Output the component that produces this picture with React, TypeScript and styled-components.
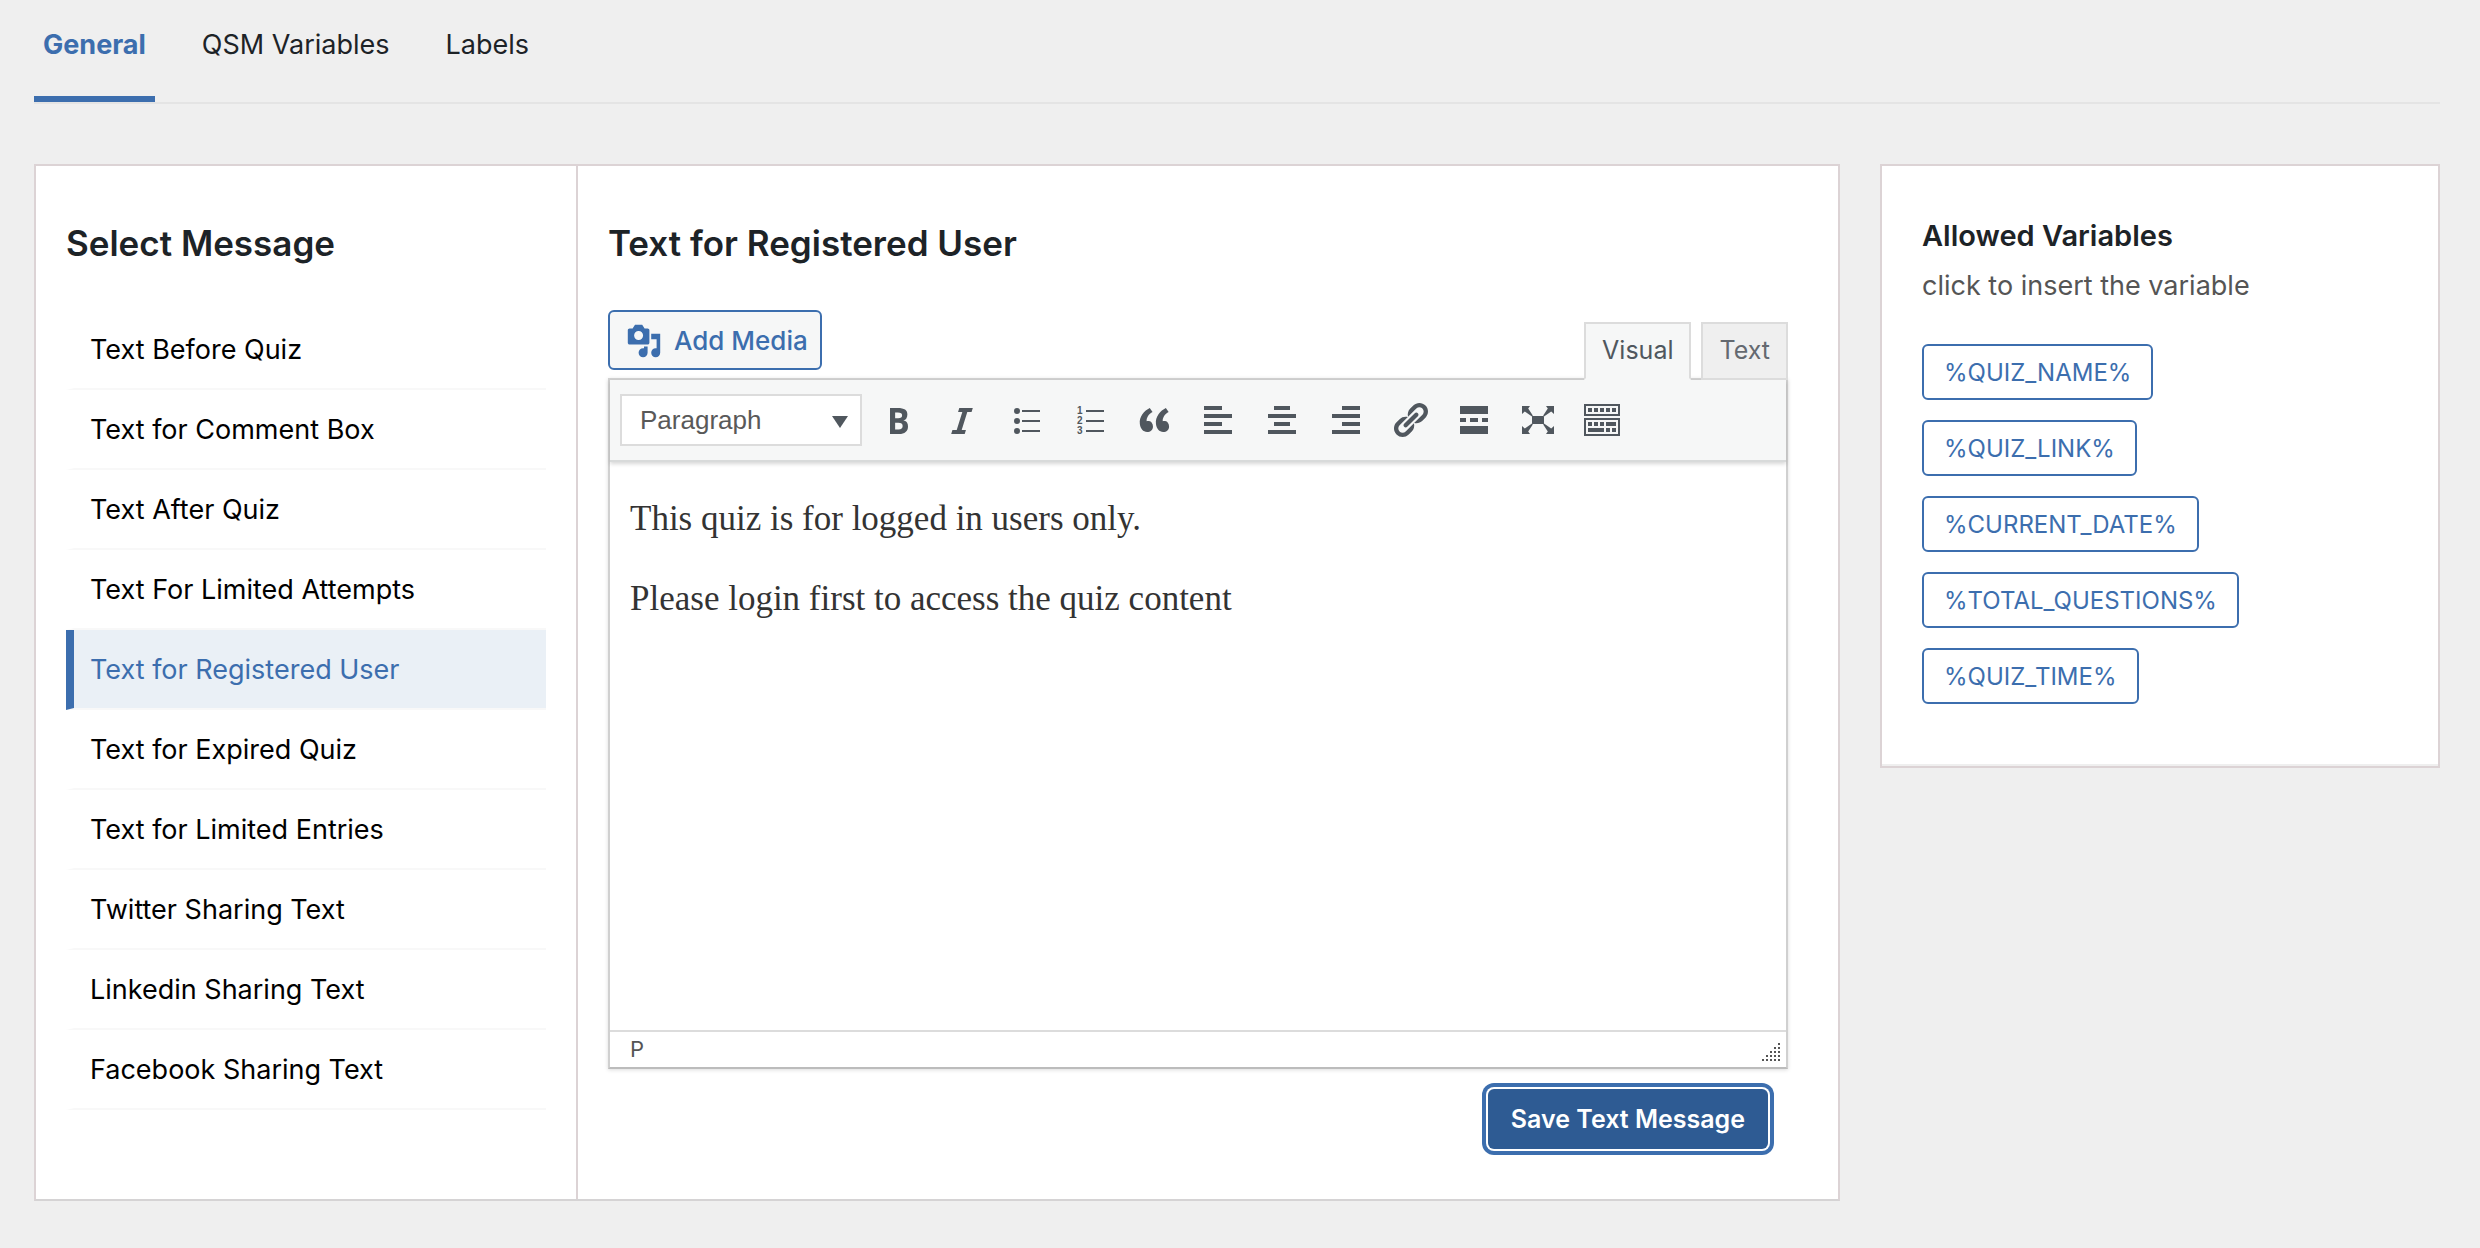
import React, { useState } from "react";
import styled, { createGlobalStyle, css } from "styled-components";

const blue = "#3c6eae";

const GlobalStyle = createGlobalStyle`
  * { box-sizing: border-box; }
  body {
    margin: 0;
    background: #efefef;
    color: #1d2327;
    font-family: Inter, "Liberation Sans", sans-serif;
    font-size: 27px;
    line-height: 40px;
  }
  button, select { font: inherit; color: inherit; cursor: pointer; }
`;

const Page = styled.div`
  padding: 0 40px 46px 34px;
`;

const TabBar = styled.nav`
  display: flex;
  gap: 38px;
  height: 104px;
  border-bottom: 2px solid #e4e4e4;
`;

const TabLink = styled.a<{ $active?: boolean }>`
  padding: 25px 9px 0;
  text-decoration: none;
  color: #1d2327;
  border-bottom: 6px solid transparent;
  ${(p) =>
    p.$active &&
    css`
      color: ${blue};
      font-weight: 700;
      border-bottom-color: ${blue};
    `}
`;

const Columns = styled.div`
  display: flex;
  align-items: flex-start;
  gap: 40px;
  margin-top: 60px;
`;

const Panel = styled.main`
  flex: 1;
  min-width: 0;
  display: flex;
  background: #fff;
  border: 2px solid #dcd3d5;
  border-bottom-color: #d5d3d4;
`;

const MessageColumn = styled.section`
  width: 542px;
  flex: none;
  padding: 57px 30px 89px;
  border-right: 2px solid #dcd3d5;
`;

const Heading = styled.h2`
  margin: 0;
  font-size: 35px;
  line-height: 40px;
  font-weight: 600;
`;

const MessageList = styled.ul`
  list-style: none;
  margin: 47px 0 0;
  padding: 0;
`;

const MessageLink = styled.a<{ $active: boolean }>`
  display: block;
  height: 80px;
  padding: 20px 16px 0;
  border-left: 8px solid transparent;
  border-bottom: 2px solid #f8f8f8;
  color: #000;
  text-decoration: none;
  ${(p) =>
    p.$active &&
    css`
      color: ${blue};
      border-left-color: ${blue};
      background: #eaf0f6;
      background-clip: padding-box;
    `}
`;

const EditorColumn = styled.section`
  flex: 1;
  min-width: 0;
  padding: 57px 50px 44px 30px;
`;

const EditorTools = styled.div`
  display: flex;
  justify-content: space-between;
  margin-top: 47px;
`;

const MediaButton = styled.button`
  display: flex;
  align-items: center;
  gap: 12px;
  height: 60px;
  padding: 2px 12px 0 16px;
  border: 2px solid ${blue};
  border-radius: 6px;
  background: #f6f7f7;
  color: ${blue};
  font-size: 26px;
  font-weight: 500;
`;

const ModeTabs = styled.div`
  display: flex;
  gap: 10px;
  padding-top: 12px;
`;

const ModeTab = styled.button<{ $active: boolean }>`
  height: 58px;
  padding: 0 16px 2px;
  border: 2px solid #dcdcdc;
  font-size: 25px;
  position: relative;
  z-index: 1;
  background: #efefef;
  color: #646970;
  margin-bottom: -2px;
  ${(p) =>
    p.$active &&
    css`
      background: #f6f7f7;
      color: #50575e;
      border-bottom-color: #f6f7f7;
    `}
`;

const EditorBox = styled.div`
  border: 2px solid #d0d0d0;
  border-bottom-color: #bcbcbc;
  box-shadow: 0 1px 4px rgba(0, 0, 0, 0.14);
`;

const Toolbar = styled.div`
  display: flex;
  align-items: center;
  gap: 4px;
  height: 82px;
  padding: 0 10px;
  background: #f6f7f7;
  border-bottom: 2px solid #d8dada;
  box-shadow: 0 2px 4px rgba(0, 0, 0, 0.16);
`;

const FormatField = styled.label`
  position: relative;
  width: 242px;
  margin-right: 2px;
`;

const FormatSelect = styled.select`
  display: block;
  appearance: none;
  width: 100%;
  height: 52px;
  padding: 0 18px;
  border: 2px solid #dcdcdc;
  border-radius: 0;
  background: #fff;
  color: #595959;
  font-family: "Liberation Sans", sans-serif;
  font-size: 26px;
`;

const Caret = styled.span`
  position: absolute;
  right: 14px;
  top: 22px;
  border: 8px solid transparent;
  border-top: 12px solid #50575e;
  border-bottom: 0;
  pointer-events: none;
`;

const ToolButton = styled.button`
  display: grid;
  place-items: center;
  width: 60px;
  height: 60px;
  padding: 0;
  border: 0;
  background: none;
  color: #50575e;
`;

const Icon = styled.svg<{ $size: number }>`
  display: block;
  width: ${(p) => p.$size}px;
  height: ${(p) => p.$size}px;
  fill: currentColor;
`;

const ListNumber = styled.text`
  font-family: "Liberation Sans", sans-serif;
  font-weight: 700;
  font-size: 10px;
`;

const EditorBody = styled.div`
  height: 568px;
  padding: 32px 20px;
  color: #333;
  font-family: Georgia, "Liberation Serif", serif;
  font-size: 35px;
  line-height: 50px;
  outline: none;
  p { margin: 0 0 30px; }
`;

const StatusBar = styled.div`
  display: flex;
  justify-content: space-between;
  align-items: flex-end;
  height: 37px;
  padding: 0 6px 6px 20px;
  border-top: 2px solid #dcdcdc;
  background: #fff;
  color: #555;
  font-size: 22px;
  line-height: 24px;
`;

const Actions = styled.div`
  display: flex;
  justify-content: flex-end;
  padding: 20px 20px 0 0;
`;

const SaveButton = styled.button`
  height: 60px;
  padding: 0 23px;
  border: 0;
  border-radius: 6px;
  background: #2e5b93;
  color: #fff;
  font-size: 25px;
  font-weight: 600;
  box-shadow: 0 0 0 2px #fff, 0 0 0 6px ${blue};
`;

const Sidebar = styled.aside`
  width: 560px;
  flex: none;
  padding: 50px 40px 62px;
  background: #fff;
  border: 2px solid #dcd3d5;
  box-shadow: inset 0 -2px 0 #efefef;
`;

const SidebarTitle = styled.h3`
  margin: 0;
  font-size: 29px;
  line-height: 40px;
  font-weight: 600;
`;

const SidebarHint = styled.p`
  margin: 10px 0 38px;
  color: #555;
`;

const VariableList = styled.div`
  display: flex;
  flex-direction: column;
  align-items: flex-start;
  gap: 20px;
`;

const VariableButton = styled.button`
  height: 56px;
  padding: 2px 20px 0;
  border: 2px solid ${blue};
  border-radius: 6px;
  background: #fff;
  color: ${blue};
  font-size: 24px;
`;

const tabs = ["General", "QSM Variables", "Labels"];

const messages = [
  "Text Before Quiz",
  "Text for Comment Box",
  "Text After Quiz",
  "Text For Limited Attempts",
  "Text for Registered User",
  "Text for Expired Quiz",
  "Text for Limited Entries",
  "Twitter Sharing Text",
  "Linkedin Sharing Text",
  "Facebook Sharing Text",
];

const variables = [
  "%QUIZ_NAME%",
  "%QUIZ_LINK%",
  "%CURRENT_DATE%",
  "%TOTAL_QUESTIONS%",
  "%QUIZ_TIME%",
];

const mediaPath =
  "M13 11V4c0-.55-.45-1-1-1h-1.67L9 1H5L3.67 3H2c-.55 0-1 .45-1 1v7c0 .55.45 1 1 1h10c.55 0 1-.45 1-1zM7 4.5c1.38 0 2.5 1.12 2.5 2.5S8.38 9.5 7 9.5 4.5 8.38 4.5 7 5.62 4.5 7 4.5zM14 6h5v10.5c0 1.38-1.12 2.5-2.5 2.5S14 17.88 14 16.5s1.12-2.5 2.5-2.5c.17 0 .34.02.5.05V9h-3V6zm-4 8.05V13h2v3.5c0 1.38-1.12 2.5-2.5 2.5S7 17.88 7 16.5 8.12 14 9.5 14c.17 0 .34.02.5.05z";

const tools: { label: string; path: string; numbered?: boolean }[] = [
  {
    label: "Bold",
    path: "M6 4v13h4.54c1.37 0 2.46-.33 3.26-1 .8-.66 1.2-1.58 1.2-2.77 0-.84-.17-1.51-.51-2.01s-.9-.85-1.67-1.03v-.09c.57-.1 1.02-.4 1.36-.9s.51-1.13.51-1.91c0-1.14-.39-1.98-1.17-2.5C12.75 4.26 11.5 4 9.78 4H6zm2.57 5.15V6.26h1.36c.73 0 1.27.11 1.61.32.34.22.51.58.51 1.07 0 .54-.16.92-.47 1.15s-.82.35-1.51.35h-1.5zm0 2.19h1.6c1.44 0 2.16.53 2.16 1.61 0 .6-.17 1.05-.51 1.34s-.86.43-1.57.43H8.57v-3.38z",
  },
  {
    label: "Italic",
    path: "M14.78 6h-2.13l-2.8 9h2.12l-.62 2H4.6l.62-2h2.14l2.8-9H8.03l.62-2h6.75z",
  },
  {
    label: "Bulleted list",
    path: "M4 5.5a1.5 1.5 0 1 1 3 0a1.5 1.5 0 1 1-3 0zM8 5h9v1H8zM4 10.5a1.5 1.5 0 1 1 3 0a1.5 1.5 0 1 1-3 0zM8 10h9v1H8zM4 15.5a1.5 1.5 0 1 1 3 0a1.5 1.5 0 1 1-3 0zM8 15h9v1H8z",
  },
  { label: "Numbered list", path: "M8 5h9v1H8zM8 10h9v1H8zM8 15h9v1H8z", numbered: true },
  {
    label: "Blockquote",
    path: "M9.49 13.22c0-.74-.2-1.38-.61-1.9-.62-.78-1.83-.88-2.53-.72-.29-1.65 1.11-3.75 2.92-4.65L7.88 4c-2.73 1.3-5.42 4.28-4.96 8.05C3.21 14.43 4.59 16 6.54 16c.85 0 1.56-.25 2.12-.75s.83-1.18.83-2.03zm8.05 0c0-.74-.2-1.38-.61-1.9-.63-.78-1.83-.88-2.53-.72-.29-1.65 1.11-3.75 2.92-4.65L15.93 4c-2.73 1.3-5.41 4.28-4.95 8.05.29 2.38 1.66 3.95 3.61 3.95.85 0 1.56-.25 2.12-.75s.83-1.18.83-2.03z",
  },
  { label: "Align left", path: "M12 5V3H3v2h9zm5 4V7H3v2h14zm-5 4v-2H3v2h9zm5 4v-2H3v2h14z" },
  { label: "Align center", path: "M14 5V3H6v2h8zm3 4V7H3v2h14zm-3 4v-2H6v2h8zm3 4v-2H3v2h14z" },
  { label: "Align right", path: "M17 5V3H8v2h9zm0 4V7H3v2h14zm0 4v-2H8v2h9zm0 4v-2H3v2h14z" },
  {
    label: "Insert link",
    path: "M17.74 2.76c1.68 1.69 1.68 4.41 0 6.1l-1.53 1.52c-1.12 1.12-2.7 1.47-4.14 1.09l2.62-2.61.76-.77.76-.76c.84-.84.84-2.2 0-3.04-.84-.85-2.2-.85-3.04 0l-.77.76-3.38 3.38c-.37-1.44-.02-3.02 1.1-4.14l1.52-1.53c1.69-1.68 4.42-1.68 6.1 0zM8.59 13.43l5.34-5.34c.42-.42.42-1.1 0-1.52-.44-.43-1.13-.39-1.53 0l-5.33 5.34c-.42.42-.42 1.1 0 1.52.44.43 1.13.39 1.52 0zm-.76 2.29l4.14-4.15c.38 1.44.03 3.02-1.09 4.14l-1.52 1.53c-1.69 1.68-4.41 1.68-6.1 0-1.68-1.68-1.68-4.42 0-6.1l1.53-1.52c1.12-1.12 2.7-1.47 4.14-1.1l-4.14 4.15c-.85.84-.85 2.2 0 3.05.84.84 2.2.84 3.04 0z",
  },
  { label: "Read more", path: "M17 7V3H3v4h14zM6 11V9H3v2h3zm6 0V9H8v2h4zm5 0V9h-3v2h3zm0 6v-4H3v4h14z" },
  {
    label: "Fullscreen",
    path: "M7 8h6v4H7zM2 3h4l-.9 1.3 2.3 3.5-.4.4L3.4 5.8 2 7zM18 3h-4l.9 1.3-2.3 3.5.4.4 3.6-2.4L18 7zM2 17h4l-.9-1.3 2.3-3.5-.4-.4-3.6 2.4L2 13zM18 17h-4l.9-1.3-2.3-3.5.4-.4 3.6 2.4L18 13z",
  },
  {
    label: "Toolbar toggle",
    path: "M19 2v6H1V2h18zm-1 5V3H2v4h16zM5 4v2H3V4h2zm3 0v2H6V4h2zm3 0v2H9V4h2zm3 0v2h-2V4h2zm3 0v2h-2V4h2zm2 5v9H1V9h18zm-1 8v-7H2v7h16zM5 11v2H3v-2h2zm3 0v2H6v-2h2zm3 0v2H9v-2h2zm6 0v2h-5v-2h5zm-6 3v2H3v-2h8zm3 0v2h-2v-2h2zm3 0v2h-2v-2h2z",
  },
];

function ToolIcon({ path, numbered }: { path: string; numbered?: boolean }) {
  return (
    <Icon $size={40} viewBox="0 0 40 40" aria-hidden="true">
      <path d={path} transform="scale(2)" />
      {numbered &&
        [1, 2, 3].map((n) => (
          <ListNumber key={n} x={7} y={4 + n * 10}>
            {n}
          </ListNumber>
        ))}
    </Icon>
  );
}

function ResizeGrip() {
  const dots = [];
  for (let row = 0; row < 5; row++) {
    for (let col = 4 - row; col < 5; col++) {
      dots.push(<rect key={`${row}-${col}`} x={col * 4} y={row * 4} width={2} height={2} />);
    }
  }
  return (
    <Icon $size={18} viewBox="0 0 18 18" aria-hidden="true">
      {dots}
    </Icon>
  );
}

export default function App() {
  const [selected, setSelected] = useState("Text for Registered User");
  const [mode, setMode] = useState("Visual");

  return (
    <>
      <GlobalStyle />
      <Page>
        <TabBar>
          {tabs.map((tab, i) => (
            <TabLink key={tab} href="#" $active={i === 0}>
              {tab}
            </TabLink>
          ))}
        </TabBar>
        <Columns>
          <Panel>
            <MessageColumn>
              <Heading>Select Message</Heading>
              <MessageList>
                {messages.map((m) => (
                  <li key={m}>
                    <MessageLink href="#" $active={m === selected} onClick={() => setSelected(m)}>
                      {m}
                    </MessageLink>
                  </li>
                ))}
              </MessageList>
            </MessageColumn>
            <EditorColumn>
              <Heading>{selected}</Heading>
              <EditorTools>
                <MediaButton type="button">
                  <Icon $size={36} viewBox="0 0 20 20" aria-hidden="true">
                    <path d={mediaPath} />
                  </Icon>
                  Add Media
                </MediaButton>
                <ModeTabs>
                  {["Visual", "Text"].map((m) => (
                    <ModeTab key={m} type="button" $active={m === mode} onClick={() => setMode(m)}>
                      {m}
                    </ModeTab>
                  ))}
                </ModeTabs>
              </EditorTools>
              <EditorBox>
                <Toolbar>
                  <FormatField>
                    <FormatSelect aria-label="Format">
                      <option>Paragraph</option>
                    </FormatSelect>
                    <Caret />
                  </FormatField>
                  {tools.map((t) => (
                    <ToolButton key={t.label} type="button" aria-label={t.label}>
                      <ToolIcon path={t.path} numbered={t.numbered} />
                    </ToolButton>
                  ))}
                </Toolbar>
                <EditorBody contentEditable suppressContentEditableWarning>
                  <p>This quiz is for logged in users only.</p>
                  <p>Please login first to access the quiz content</p>
                </EditorBody>
                <StatusBar>
                  <span>P</span>
                  <ResizeGrip />
                </StatusBar>
              </EditorBox>
              <Actions>
                <SaveButton type="button">Save Text Message</SaveButton>
              </Actions>
            </EditorColumn>
          </Panel>
          <Sidebar>
            <SidebarTitle>Allowed Variables</SidebarTitle>
            <SidebarHint>click to insert the variable</SidebarHint>
            <VariableList>
              {variables.map((v) => (
                <VariableButton key={v} type="button">
                  {v}
                </VariableButton>
              ))}
            </VariableList>
          </Sidebar>
        </Columns>
      </Page>
    </>
  );
}
